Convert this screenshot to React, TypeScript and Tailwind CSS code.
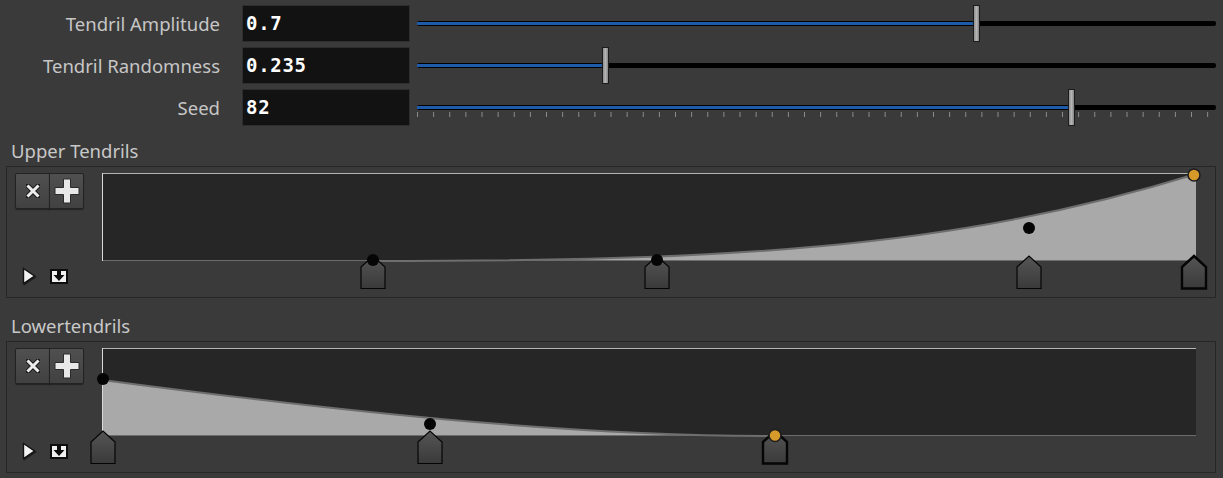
import React from "react";

const sans = { fontFamily: '"Noto Sans", "Open Sans", sans-serif' };
const mono = { fontFamily: '"DejaVu Sans Mono", "Liberation Mono", monospace' };

type Pt = { x: number; y: number; sel?: boolean };
type Ramp = {
  label: string;
  fill: string;
  curve: string;
  keys: Pt[];
  dots: Pt[];
};

function Slider({ frac, ticks }: { frac: number; ticks?: boolean }) {
  return (
    <div className="relative flex-1 h-full">
      <div className="absolute left-0 right-0 top-[16px] h-[5px] bg-black rounded-[2px]">
        <div className="h-[3px] mt-[1px] bg-[#1f5bab]" style={{ width: `${frac * 100}%` }} />
      </div>
      {ticks && (
        <svg className="absolute left-0 top-[23px]" width="799" height="5">
          {Array.from({ length: 50 }, (_, i) => (
            <line key={i} x1={i * 16.125 + 0.5} x2={i * 16.125 + 0.5} y1="0" y2="5" stroke="#8c8c8c" strokeWidth="1" />
          ))}
        </svg>
      )}
      <div
        className="absolute top-0 bottom-0 w-[7px] -ml-[3px] border border-[#1c1c1c] bg-gradient-to-r from-[#8e8e8e] via-[#b4b4b4] to-[#858585]"
        style={{ left: `${frac * 100}%` }}
      />
    </div>
  );
}

function ParmRow({ label, value, frac, ticks }: { label: string; value: string; frac: number; ticks?: boolean }) {
  return (
    <div className="flex items-center h-[37px]">
      <div className="w-[220px] text-right text-[18.5px] text-[#c6c6c6]" style={sans}>
        {label}
      </div>
      <div
        className="ml-[22px] w-[168px] h-full bg-[#121212] border border-[#2e2e2e] flex items-center pl-[3px] text-[19px] font-bold tracking-[0.7px] text-white"
        style={mono}
      >
        {value}
      </div>
      <div className="ml-[7px] mr-[7px] flex-1 h-full flex">
        <Slider frac={frac} ticks={ticks} />
      </div>
    </div>
  );
}

function ToolButton({ children, left }: { children: React.ReactNode; left?: boolean }) {
  return (
    <div
      className={
        "w-[35px] h-[36px] flex items-center justify-center border border-[#232323] bg-gradient-to-b from-[#505050] to-[#414141] shadow-[0_1px_1px_rgba(0,0,0,0.4)]" +
        (left ? " rounded-l-[2px]" : " rounded-r-[2px] -ml-px")
      }
    >
      {children}
    </div>
  );
}

function RampPanel({ ramp }: { ramp: Ramp }) {
  return (
    <div>
      <div className="h-[24px] leading-[24px] pl-[11px] text-[18.5px] text-[#c8c8c8]" style={sans}>
        {ramp.label}
      </div>
      <div className="mt-[3px] ml-[6px] mr-[7px] h-[132px] border border-[#262626] flex">
        <div className="w-[81px] pl-[8px] pt-[6px] pb-[12px] flex flex-col justify-between">
          <div className="flex">
            <ToolButton left>
              <svg width="14" height="14" viewBox="0 0 14 14">
                <path d="M2 2 L12 12 M12 2 L2 12" stroke="#1a1a1a" strokeWidth="5" strokeLinecap="square" />
                <path d="M2.5 2.5 L11.5 11.5 M11.5 2.5 L2.5 11.5" stroke="#ececec" strokeWidth="3" strokeLinecap="square" />
              </svg>
            </ToolButton>
            <ToolButton>
              <svg width="26" height="26" viewBox="0 0 26 26">
                <path d="M9.5 1 H16.5 V9.5 H25 V16.5 H16.5 V25 H9.5 V16.5 H1 V9.5 H9.5 Z" fill="#e8e8e8" stroke="#2a2a2a" strokeWidth="1" />
              </svg>
            </ToolButton>
          </div>
          <div className="flex items-center pl-[7px] gap-[13px]">
            <svg width="15" height="18" viewBox="0 0 15 18" className="drop-shadow-[1px_1px_0_rgba(0,0,0,0.5)]">
              <path d="M1.5 1.5 L12.5 9 L1.5 16.5 Z" fill="#f2f2f2" stroke="#111" strokeWidth="1.4" />
            </svg>
            <svg width="18" height="15" viewBox="0 0 18 15">
              <rect x="0" y="0" width="18" height="15" fill="#0d0d0d" />
              <rect x="2" y="2" width="14" height="11" fill="#f0f0f0" />
              <rect x="7" y="2" width="4" height="4" fill="#0d0d0d" />
              <path d="M3.5 6 L14.5 6 L9 12 Z" fill="#0d0d0d" />
            </svg>
          </div>
        </div>
        <svg width="1126" height="129" viewBox="88 167 1126 129">
          <defs>
            <linearGradient id="keyg" x1="0" y1="0" x2="0" y2="1">
              <stop offset="0" stopColor="#555555" />
              <stop offset="1" stopColor="#3a3a3a" />
            </linearGradient>
          </defs>
          <rect x="102" y="173" width="1094" height="88" fill="#262626" />
          <path d={ramp.fill} fill="#a9a9a9" />
          <line x1="102" y1="260.5" x2="1196" y2="260.5" stroke="#6c6c6c" strokeWidth="1" />
          <path d={ramp.curve} fill="none" stroke="#6e6e6e" strokeWidth="2" />
          <line x1="102" y1="173.5" x2="1196" y2="173.5" stroke="#b4b4b4" strokeWidth="1" />
          <line x1="102.5" y1="173" x2="102.5" y2="261" stroke="#d8d8d8" strokeWidth="1" />
          {ramp.keys.map((k, i) => (
            <path
              key={i}
              d={`M${k.x - 12},288.5 L${k.x - 12},267 L${k.x},256 L${k.x + 12},267 L${k.x + 12},288.5 Z`}
              fill="url(#keyg)"
              stroke="#050505"
              strokeWidth={k.sel ? 2.4 : 1.2}
              strokeLinejoin="miter"
            />
          ))}
          {ramp.dots.map((d, i) =>
            d.sel ? (
              <circle key={i} cx={d.x} cy={d.y} r="6" fill="#d69a2a" stroke="#1e1e1e" strokeWidth="1.6" />
            ) : (
              <circle key={i} cx={d.x} cy={d.y} r="6" fill="#050505" />
            )
          )}
        </svg>
      </div>
    </div>
  );
}

const upper: Ramp = {
  label: "Upper Tendrils",
  fill: "M102,261 L373,261 C720,261 950,250 1196,174 L1196,261 Z",
  curve: "M373,261 C720,261 950,250 1196,174",
  keys: [{ x: 373 }, { x: 657 }, { x: 1029 }, { x: 1194, sel: true }],
  dots: [{ x: 373, y: 260 }, { x: 657, y: 260 }, { x: 1029, y: 228 }, { x: 1194, y: 175, sel: true }],
};

const lower: Ramp = {
  label: "Lowertendrils",
  fill: "M102,205 C330,235 560,261 775,261 L102,261 Z",
  curve: "M102,205 C330,235 560,261 775,261",
  keys: [{ x: 103 }, { x: 430 }, { x: 775, sel: true }],
  dots: [{ x: 103, y: 204 }, { x: 430, y: 249 }, { x: 775, y: 260.5, sel: true }],
};

export default function App() {
  return (
    <div className="w-[1223px] h-[478px] bg-[#3a3a3a] overflow-hidden pt-[5px]">
      <div className="flex flex-col gap-[5px]">
        <ParmRow label="Tendril Amplitude" value="0.7" frac={0.7} />
        <ParmRow label="Tendril Randomness" value="0.235" frac={0.235} />
        <ParmRow label="Seed" value="82" frac={0.818} ticks />
      </div>
      <div className="mt-[13px]">
        <RampPanel ramp={upper} />
      </div>
      <div className="mt-[16px]">
        <RampPanel ramp={lower} />
      </div>
    </div>
  );
}
